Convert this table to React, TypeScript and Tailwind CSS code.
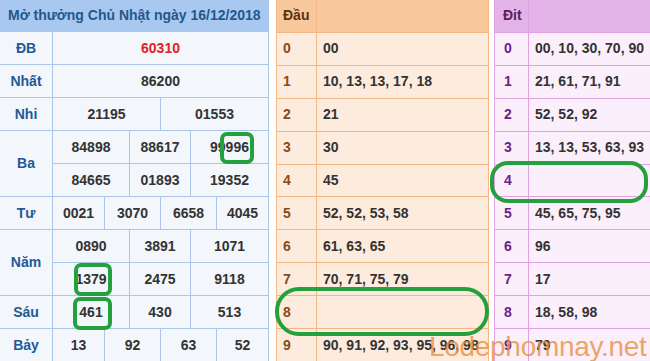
import React from "react"

const ba = "grid grid-cols-[76px_60px_77px] gap-px"
const tu = "grid grid-cols-[51px_55px_55px_51px] gap-px"
const cell = "h-[32px] bg-[#f3f6fb] flex items-center justify-center text-[14px] font-bold text-[#333]"
const label = "w-[52px] bg-[#f3f6fb] flex items-center justify-center text-[14px] font-bold text-[#1e5a96]"

const Row = ({ cols, values }: { cols: string; values: string[] }) => (
  <div className={cols}>
    {values.map((v, i) => (
      <div key={i} className={cell}>
        {v}
      </div>
    ))}
  </div>
)

const Group = ({ name, rows }: { name: string; rows: React.ReactNode }) => (
  <div className="flex gap-px">
    <div className={label}>{name}</div>
    <div className="flex-1 flex flex-col gap-px">{rows}</div>
  </div>
)

const dau = [
  "00",
  "10, 13, 13, 17, 18",
  "21",
  "30",
  "45",
  "52, 52, 53, 58",
  "61, 63, 65",
  "70, 71, 75, 79",
  "",
  "90, 91, 92, 93, 95, 96, 98",
]

const dit = [
  "00, 10, 30, 70, 90",
  "21, 61, 71, 91",
  "52, 52, 92",
  "13, 13, 53, 63, 93",
  "",
  "45, 65, 75, 95",
  "96",
  "17",
  "18, 58, 98",
  "79",
]

const Ring = ({ className }: { className: string }) => (
  <div className={"absolute border-4 border-[#24a03c] " + className}></div>
)

export default function App() {
  return (
    <div
      className="relative w-[650px] h-[361px] overflow-hidden bg-white flex"
      style={{ fontFamily: '"Liberation Sans", Arial, sans-serif' }}
    >
      {/* kết quả */}
      <div className="w-[269px] shrink-0 flex flex-col gap-px bg-[#abc6ea] pr-px">
        <div className="h-[32px] bg-[#a9c8ef] flex items-center pl-[8px] text-[14px] font-bold text-[#24578c] whitespace-nowrap">
          Mở thưởng Chủ Nhật ngày 16/12/2018
        </div>
        <Group name="ĐB" rows={<div className={cell}><span className="text-[#e02424]">60310</span></div>} />
        <Group name="Nhất" rows={<div className={cell}>86200</div>} />
        <Group name="Nhi" rows={<Row cols="grid grid-cols-[107px_107px] gap-px" values={["21195", "01553"]} />} />
        <Group
          name="Ba"
          rows={
            <>
              <Row cols={ba} values={["84898", "88617", "99996"]} />
              <Row cols={ba} values={["84665", "01893", "19352"]} />
            </>
          }
        />
        <Group name="Tư" rows={<Row cols={tu} values={["0021", "3070", "6658", "4045"]} />} />
        <Group
          name="Năm"
          rows={
            <>
              <Row cols={ba} values={["0890", "3891", "1071"]} />
              <Row cols={ba} values={["1379", "2475", "9118"]} />
            </>
          }
        />
        <Group name="Sáu" rows={<Row cols={ba} values={["461", "430", "513"]} />} />
        <Group name="Bảy" rows={<Row cols={tu} values={["13", "92", "63", "52"]} />} />
      </div>

      {/* đầu */}
      <div className="ml-[7px] w-[213px] shrink-0 flex flex-col gap-px bg-[#f2b784] px-px">
        <div className="h-[32px] flex gap-px">
          <div className="w-[39px] bg-[#f8c79b] flex items-center pl-[6px] text-[14px] font-bold text-[#5a3312]">Đầu</div>
          <div className="flex-1 bg-[#f8c79b]"></div>
        </div>
        {dau.map((v, i) => (
          <div key={i} className="h-[32px] flex gap-px">
            <div className="w-[39px] bg-[#fdecdd] flex items-center pl-[6px] text-[14px] font-bold text-[#8b4a16]">{i}</div>
            <div className="flex-1 bg-[#fdecdd] flex items-center pl-[6px] text-[14px] font-bold text-[#333] whitespace-nowrap">
              {v}
            </div>
          </div>
        ))}
      </div>

      {/* đít */}
      <div className="ml-[5px] flex-1 flex flex-col gap-px bg-[#dfa3e2] pl-px">
        <div className="h-[32px] flex gap-px">
          <div className="w-[33px] bg-[#e3b2e6] flex items-center pl-[8px] text-[14px] font-bold text-[#5b1d5e]">Đit</div>
          <div className="flex-1 bg-[#e3b2e6]"></div>
        </div>
        {dit.map((v, i) => (
          <div key={i} className="h-[32px] flex gap-px">
            <div className="w-[33px] bg-[#fbeffb] flex items-center pl-[9px] text-[14px] font-bold text-[#6b1f86]">{i}</div>
            <div className="flex-1 bg-[#fbeffb] flex items-center pl-[6px] text-[14px] font-bold text-[#333] whitespace-nowrap">
              {v}
            </div>
          </div>
        ))}
      </div>

      <Ring className="left-[220px] top-[132px] w-[34px] h-[32px] rounded-[7px]" />
      <Ring className="left-[74px] top-[263px] w-[38px] h-[33px] rounded-[7px]" />
      <Ring className="left-[73px] top-[297px] w-[39px] h-[33px] rounded-[7px]" />
      <Ring className="left-[275px] top-[287px] w-[214px] h-[49px] rounded-[24px]" />
      <Ring className="left-[490px] top-[161px] w-[158px] h-[42px] rounded-[18px]" />

      <div className="absolute left-[429px] top-[333px] text-[28px] tracking-[-0.3px] leading-none text-[#e88f3c]/80 whitespace-nowrap">
        Lodephomnay.net
      </div>
    </div>
  )
}
